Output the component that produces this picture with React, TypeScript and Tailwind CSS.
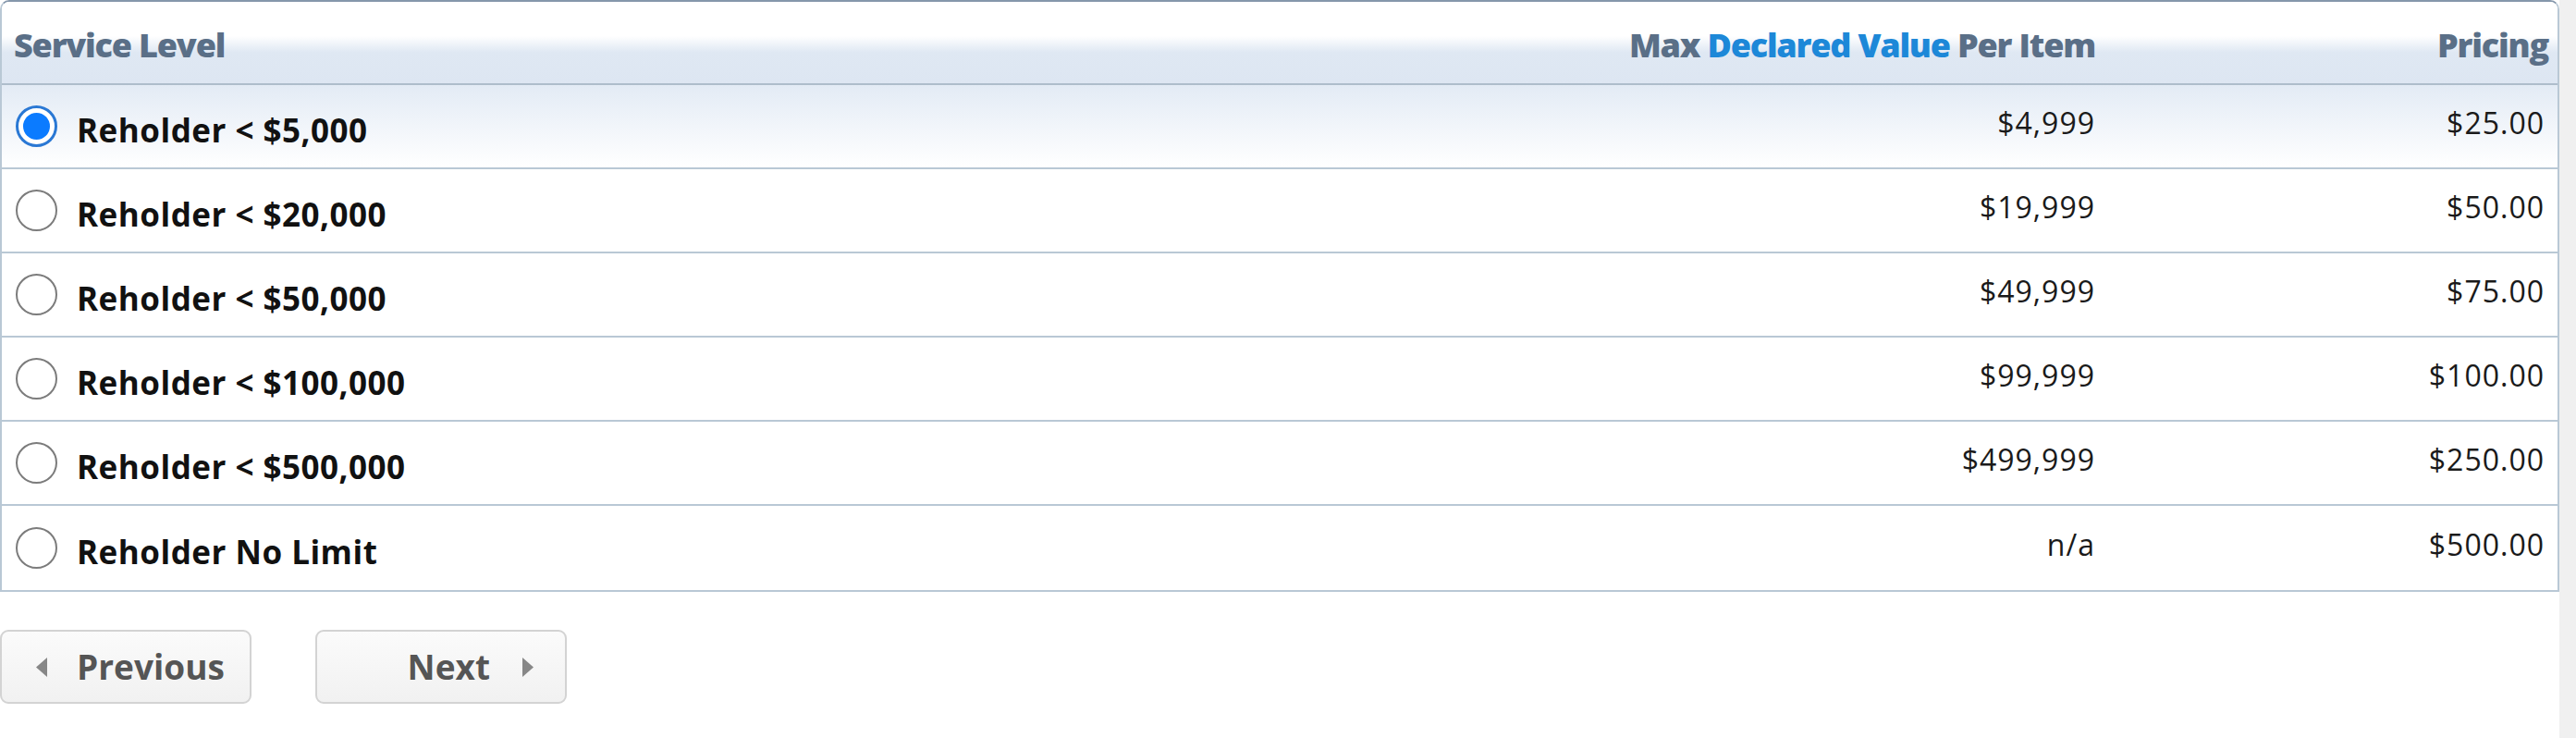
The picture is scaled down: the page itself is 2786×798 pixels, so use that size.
import React from "react";

const rows = [
  { label: "Reholder < $5,000", max: "$4,999", price: "$25.00", selected: true },
  { label: "Reholder < $20,000", max: "$19,999", price: "$50.00" },
  { label: "Reholder < $50,000", max: "$49,999", price: "$75.00" },
  { label: "Reholder < $100,000", max: "$99,999", price: "$100.00" },
  { label: "Reholder < $500,000", max: "$499,999", price: "$250.00" },
  { label: "Reholder No Limit", max: "n/a", price: "$500.00" },
];

function Radio({ selected }: { selected?: boolean }) {
  if (selected) {
    return (
      <div className="w-[45px] h-[45px] rounded-full border-[3px] border-[#2a78d4] bg-white flex items-center justify-center shrink-0">
        <div className="w-[29px] h-[29px] rounded-full bg-[#0b7bff]" />
      </div>
    );
  }
  return <div className="w-[45px] h-[45px] rounded-full border-[2.5px] border-[#7c7c7c] bg-white shrink-0" />;
}

export default function App() {
  return (
    <div
      className="flex w-[2786px] h-[798px] bg-white"
      style={{ fontFamily: '"Open Sans", "Noto Sans", sans-serif' }}
    >
      <div className="flex-1 flex flex-col">
        <div className="w-[2768px] border-x-2 border-b-2 border-t-2 border-x-[#b9c8d5] border-b-[#b9c8d5] border-t-[#8597ab] rounded-t-[10px] overflow-hidden">
          {/* header */}
          <div className="flex h-[90px] border-b-2 border-[#aebdcb] bg-[linear-gradient(to_bottom,#ffffff_0%,#ffffff_42%,#dfe8f3_62%,#dde6f2_100%)] text-[36px] font-extrabold tracking-[-1.2px] text-[#5a6f87] pt-[6px]">
            <div className="flex-1 flex items-center pl-[13px]">Service Level</div>
            <div className="w-[900px] flex items-center justify-end pr-[14px]">
              <span>
                Max <span className="text-[#1d88d8]">Declared Value</span> Per Item
              </span>
            </div>
            <div className="w-[486px] flex items-center justify-end pr-[10px]">Pricing</div>
          </div>
          {rows.map((r, i) => (
            <div
              key={i}
              className={
                "flex h-[91px] " +
                (i < rows.length - 1 ? "border-b-2 border-[#b9c8d5] " : "") +
                (r.selected ? "bg-[linear-gradient(to_bottom,#e3ebf5_0%,#ffffff_100%)]" : "bg-white")
              }
            >
              <div className="flex-1 flex items-center pl-[15px]">
                <Radio selected={r.selected} />
                <span className="ml-[21px] pt-[9px] text-[35px] font-bold tracking-[0.5px] text-[#111111]">
                  {r.label}
                </span>
              </div>
              <div className="w-[900px] flex items-center justify-end pr-[14px] pb-[7px] text-[32px] font-normal tracking-[1px] text-[#1a1a1a]">
                {r.max}
              </div>
              <div className="w-[486px] flex items-center justify-end pr-[14px] pb-[7px] text-[32px] font-normal tracking-[1px] text-[#1a1a1a]">
                {r.price}
              </div>
            </div>
          ))}
        </div>
        <div className="flex gap-[69px] mt-[41px]">
          <button className="w-[272px] h-[80px] rounded-[9px] border-2 border-[#d3d3d3] bg-[linear-gradient(to_bottom,#fbfbfb,#f1f1f1)] flex items-center pl-[37px] text-[37px] font-bold text-[#555555]">
            <svg width="12" height="21" viewBox="0 0 12 21" className="shrink-0">
              <polygon points="12,0 12,21 0,10.5" fill="#878787" />
            </svg>
            <span className="ml-[32px]">Previous</span>
          </button>
          <button className="w-[272px] h-[80px] rounded-[9px] border-2 border-[#d3d3d3] bg-[linear-gradient(to_bottom,#fbfbfb,#f1f1f1)] flex items-center justify-end pr-[34px] text-[37px] font-bold text-[#555555]">
            <span className="mr-[35px]">Next</span>
            <svg width="12" height="21" viewBox="0 0 12 21" className="shrink-0">
              <polygon points="0,0 0,21 12,10.5" fill="#878787" />
            </svg>
          </button>
        </div>
      </div>
      <div className="w-[18px] bg-[#f0f0f0]" />
    </div>
  );
}
